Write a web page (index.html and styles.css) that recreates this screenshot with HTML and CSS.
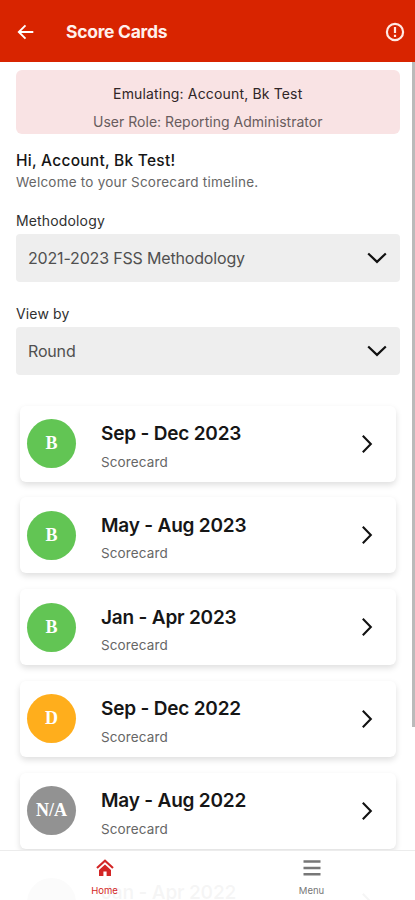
FILE: index.html
```html
<!DOCTYPE html>
<html lang="en">
<head>
<meta charset="utf-8">
<meta name="viewport" content="width=device-width, initial-scale=1">
<title>Score Cards</title>
<link rel="stylesheet" href="styles.css">
</head>
<body>
<div class="app">
  <header class="topbar">
    <svg class="back" viewBox="0 0 18 18"><path d="M16.3 9H2.5M8.5 2.3L1.8 9l6.7 6.7"/></svg>
    <h1>Score Cards</h1>
    <svg class="alert" viewBox="0 0 20 20"><circle cx="10" cy="10" r="8.1"/><path d="M10 5v6M10 12.7v2.2"/></svg>
  </header>
  <main class="content">
    <section class="banner">
      <p class="emulating">Emulating: Account, Bk Test</p>
      <p class="role">User Role: Reporting Administrator</p>
    </section>
    <h2 class="greeting">Hi, Account, Bk Test!</h2>
    <p class="welcome">Welcome to your Scorecard timeline.</p>
    <div class="field">
      <span class="label">Methodology</span>
      <div class="select"><span>2021-2023 FSS Methodology</span><svg class="down" viewBox="0 0 20 12"><path d="M1.2 1.5l8.8 8.4 8.8-8.4"/></svg></div>
    </div>
    <div class="field">
      <span class="label">View by</span>
      <div class="select"><span>Round</span><svg class="down" viewBox="0 0 20 12"><path d="M1.2 1.5l8.8 8.4 8.8-8.4"/></svg></div>
    </div>
    <div class="cards">
      <article class="card"><span class="grade good">B</span><div class="info"><h3>Sep - Dec 2023</h3><p>Scorecard</p></div><svg class="next" viewBox="0 0 12 20"><path d="M1.8 1.8l8 8.2-8 8.2"/></svg></article>
      <article class="card"><span class="grade good">B</span><div class="info"><h3>May - Aug 2023</h3><p>Scorecard</p></div><svg class="next" viewBox="0 0 12 20"><path d="M1.8 1.8l8 8.2-8 8.2"/></svg></article>
      <article class="card"><span class="grade good">B</span><div class="info"><h3>Jan - Apr 2023</h3><p>Scorecard</p></div><svg class="next" viewBox="0 0 12 20"><path d="M1.8 1.8l8 8.2-8 8.2"/></svg></article>
      <article class="card"><span class="grade fair">D</span><div class="info"><h3>Sep - Dec 2022</h3><p>Scorecard</p></div><svg class="next" viewBox="0 0 12 20"><path d="M1.8 1.8l8 8.2-8 8.2"/></svg></article>
      <article class="card"><span class="grade none">N/A</span><div class="info"><h3>May - Aug 2022</h3><p>Scorecard</p></div><svg class="next" viewBox="0 0 12 20"><path d="M1.8 1.8l8 8.2-8 8.2"/></svg></article>
      <article class="card"><span class="grade none"></span><div class="info"><h3>Jan - Apr 2022</h3></div><svg class="next" viewBox="0 0 12 20"><path d="M1.8 1.8l8 8.2-8 8.2"/></svg></article>
    </div>
  </main>
  <div class="scrollbar"></div>
  <nav class="tabs">
    <a class="tab active"><svg viewBox="0 0 18 18"><path class="roof" d="M1 9l8-7.3L17 9"/><path class="house" d="M9 5.6l6 5.5V17h-4.4v-4.6H7.4V17H3v-5.9z"/></svg><span>Home</span></a>
    <a class="tab"><svg viewBox="0 0 18 18"><path class="bars" d="M.5 2.5h17M.5 9h17M.5 15.3h17"/></svg><span>Menu</span></a>
  </nav>
</div>
</body>
</html>
```
FILE: styles.css
```css
* { box-sizing: border-box; }
body, h1, h2, h3, p { margin: 0; }
body { font-family: Inter, "Liberation Sans", sans-serif; background: #fff; color: #222; }
.app { position: relative; width: 415px; height: 900px; overflow: hidden; }
svg { fill: none; stroke: currentColor; flex: none; }

.topbar { display: flex; align-items: center; height: 62px; padding: 1px 10px 0 17px; background: #d82400; color: #fff; }
.back { width: 18px; height: 18px; stroke-width: 1.9; }
.topbar h1 { margin-left: 31px; font-size: 17.5px; line-height: 24px; font-weight: 700; letter-spacing: -.28px; color: #fff0ec; }
.alert { width: 20px; height: 20px; margin-left: auto; stroke-width: 2.2; color: #ffe9e4; }

.content { padding: 8px 15.5px 0 16px; }
.banner { height: 64px; padding-top: 10px; border-radius: 6px; background: #f9e3e4; text-align: center; line-height: 28px; font-size: 14px; }
.emulating { color: #302627; letter-spacing: .16px; }
.role { color: #685c5d; letter-spacing: .02px; }
.greeting { margin-top: 17px; font-size: 15.5px; line-height: 20px; font-weight: 500; letter-spacing: .25px; color: #151515; }
.welcome { margin-top: 1px; font-size: 13.5px; line-height: 20px; letter-spacing: .22px; color: #666; }
.field { display: flex; flex-direction: column; }
.label { margin-top: 18px; height: 24px; font-size: 14px; line-height: 21px; letter-spacing: .15px; color: #303030; }
.select { display: flex; align-items: center; justify-content: space-between; height: 48px; padding: 0 13px 0 12px; border-radius: 4px; background: #eee; font-size: 16px; letter-spacing: -.17px; color: #505050; }
.field + .field .label { margin-top: 21px; }
.down { width: 20px; height: 12px; stroke-width: 2.2; color: #111; }

.cards { display: flex; flex-direction: column; gap: 15.8px; margin-top: 30.5px; padding: 0 3.5px 0 4px; }
.card { display: flex; align-items: center; flex: none; height: 76px; padding: 0 23px 0 7px; border-radius: 6px; background: #fff; box-shadow: 0 3px 6px rgba(0,0,0,.13); }
.grade { display: flex; align-items: center; justify-content: center; width: 49px; height: 49px; border-radius: 50%; font: 700 18px "Liberation Serif", serif; color: #fff; }
.good { background: #62c554; }
.fair { background: #ffae1c; }
.none { background: #929292; }
.info { flex: 1; height: 55px; margin-left: 25px; padding-top: 4px; }
.info h3 { font-size: 19px; line-height: 28px; font-weight: 600; letter-spacing: -.2px; color: #161616; }
.info p { margin-top: 1.6px; font-size: 13.5px; line-height: 24px; letter-spacing: .12px; color: #666; }
.next { width: 12px; height: 20px; stroke-width: 2.1; color: #111; }

.scrollbar { position: absolute; top: 62px; right: 0; width: 3px; height: 665px; background: #bababa; }
.tabs { position: absolute; left: 0; right: 0; bottom: 0; display: flex; height: 50px; padding-left: 1px; border-top: 1.5px solid #ececec; background: rgba(255,255,255,.96); }
.tab { flex: 1; display: flex; flex-direction: column; align-items: center; padding-top: 8px; font-size: 9.5px; line-height: 12px; color: #777; }
.tab svg { width: 18px; height: 18px; margin-bottom: 8px; }
.tab.active { color: #d32626; }
.roof { stroke-width: 2.1; }
.house { fill: currentColor; stroke: none; }
.bars { stroke-width: 2.4; }
```
